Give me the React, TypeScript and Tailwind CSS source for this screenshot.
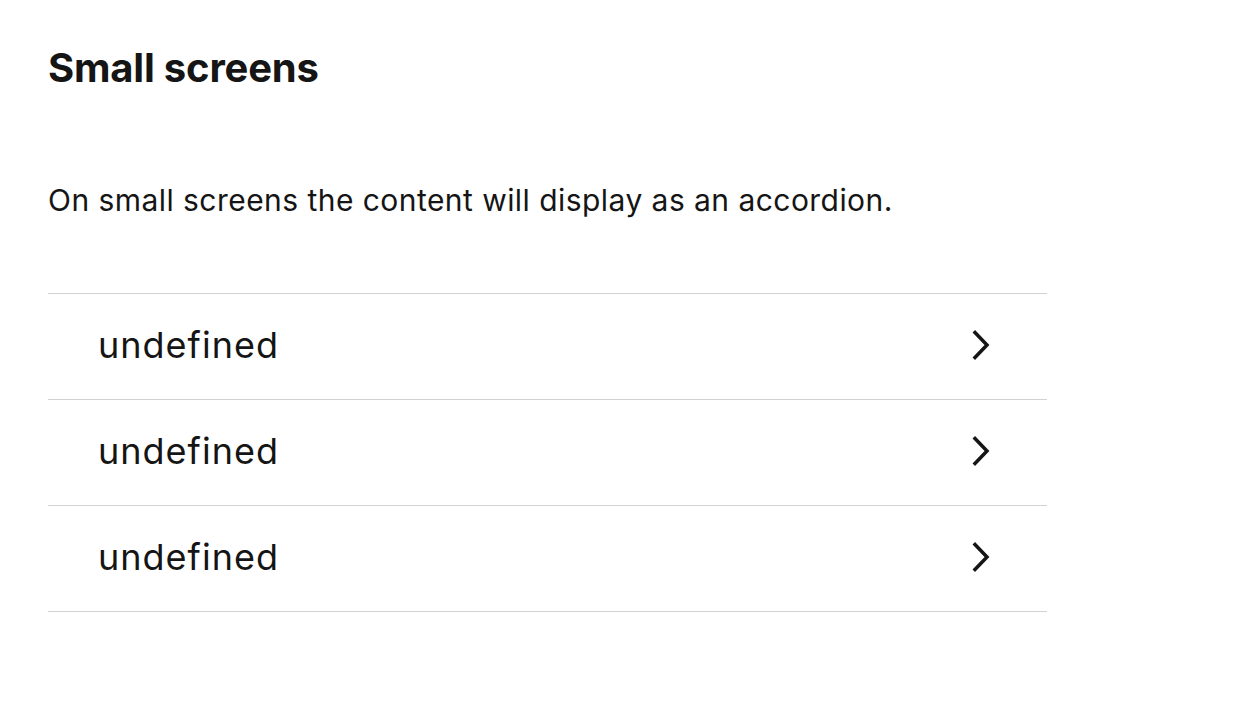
import React from "react";

const items = ["undefined", "undefined", "undefined"];

const Chevron = () => (
  <svg width="20" height="30" viewBox="0 0 20 30" fill="none">
    <path d="M4 2.5 L16 15 L4 27.5" stroke="#151515" strokeWidth="3.5" strokeLinecap="square" />
  </svg>
);

export default function App() {
  return (
    <div className="min-h-screen bg-white text-[#151515] font-['Inter',sans-serif] px-12 pt-[44px]">
      <h2 className="text-[40px] font-bold leading-[48px] tracking-[-0.2px]">Small screens</h2>
      <p className="mt-[88px] text-[30px] leading-[40px] tracking-[0.45px]">
        On small screens the content will display as an accordion.
      </p>
      <div className="mt-[73px] w-[999px] border-b border-[#d2d2d2]">
        {items.map((label, i) => (
          <button
            key={i}
            className="flex w-full h-[106px] items-center justify-between border-t border-[#d2d2d2] pl-[50px] pr-[56px] pb-[3px] text-left"
          >
            <span className="text-[36px] tracking-[1px]">{label}</span>
            <Chevron />
          </button>
        ))}
      </div>
    </div>
  );
}
